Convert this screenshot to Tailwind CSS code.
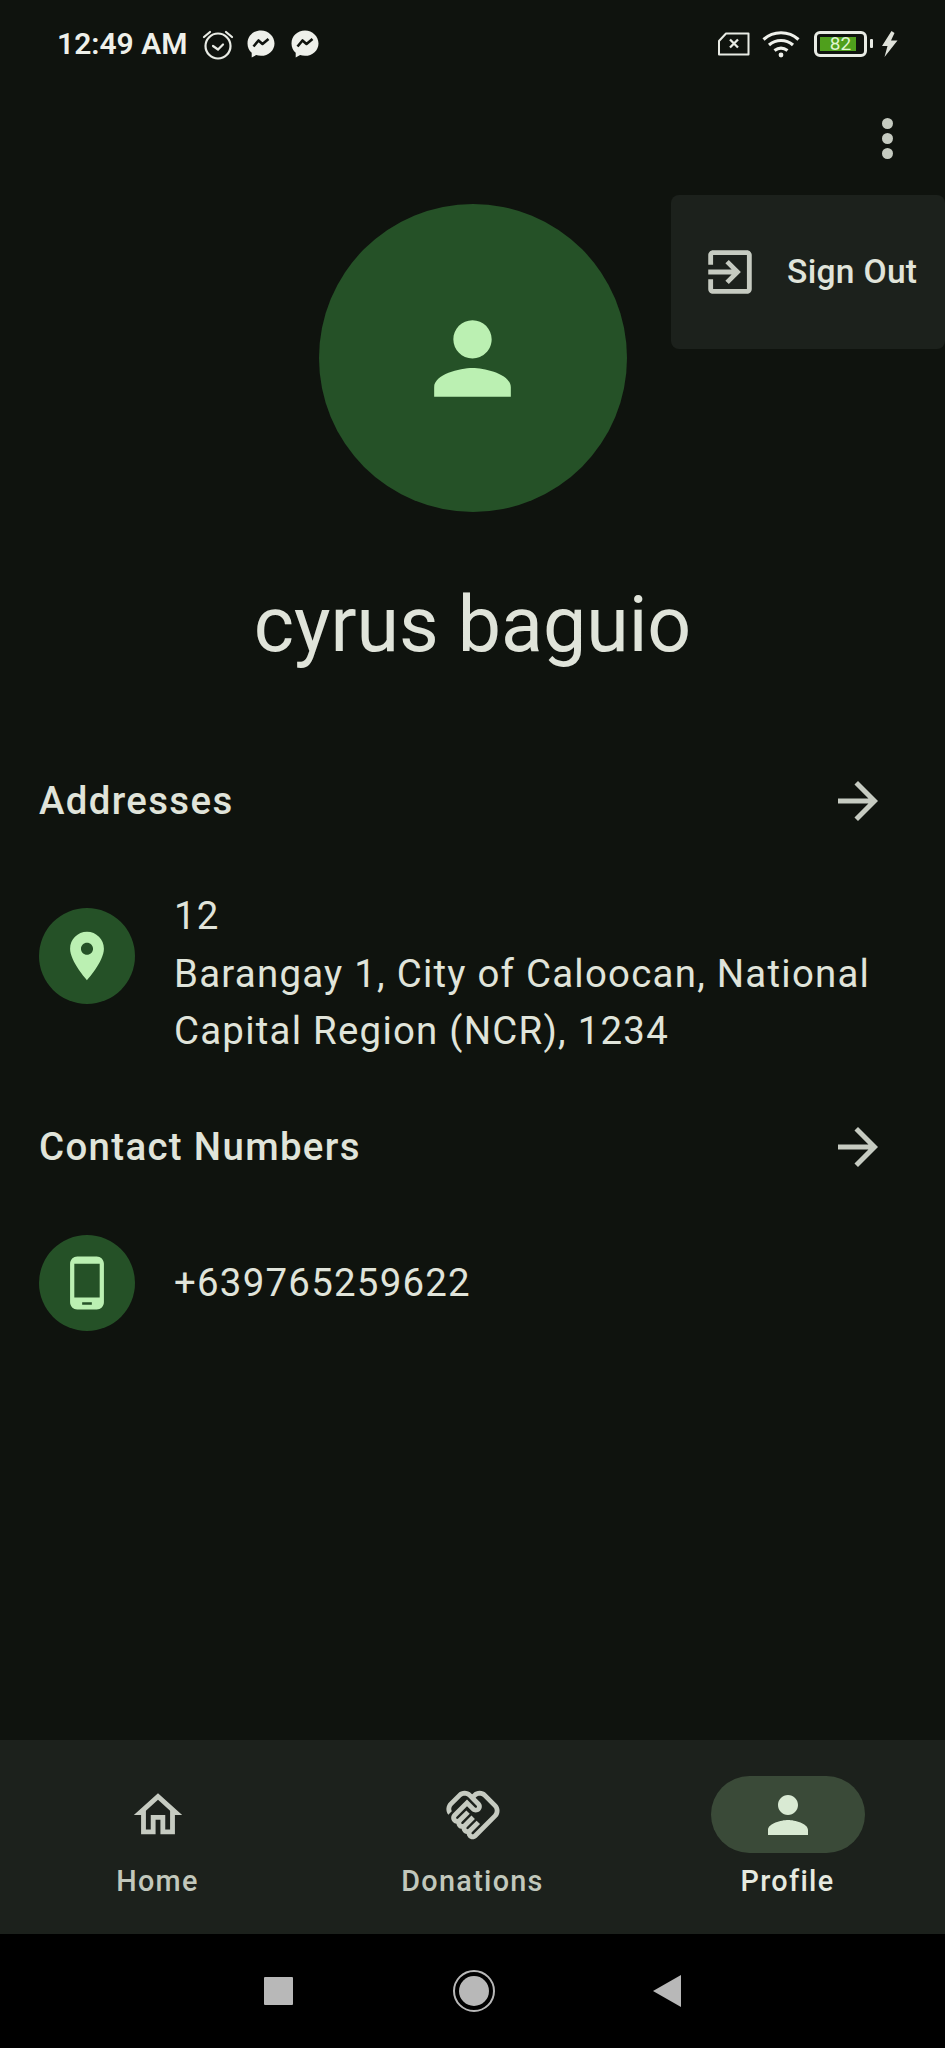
<!DOCTYPE html>
<html><head><meta charset="utf-8"><script src="https://cdn.jsdelivr.net/npm/@tailwindcss/browser@4"></script></head>
<body class="bg-[#0f130e]">
<div class="relative w-[945px] h-[2048px] flex flex-col bg-[#0f130e] overflow-hidden font-['Roboto',sans-serif] text-[#e0e4da]">
  <!-- status bar -->
  <div class="h-[86px] shrink-0 flex items-center pt-[1px] pl-[57px] pr-[47px] text-[#eef0ea]">
    <span class="text-[30px] font-semibold leading-none">12:49 AM</span>
    <svg class="ml-[14px] w-[34px] h-[34px] mt-[2px]" viewBox="0 0 34 34" fill="none" stroke="#e8ebe4" stroke-width="2.2"><circle cx="17" cy="18" r="12.5"/><path d="M12 18l5 3.5 5-5" stroke-linecap="round"/><path d="M3 9l6-5M31 9l-6-5" stroke-linecap="round"/></svg>
    <svg class="ml-[11px] w-[30px] h-[30px]" viewBox="0 0 30 30"><path fill="#eef0ea" d="M15 1.5C7.4 1.500 1.500 7.100 1.500 14.400c0 3.800 1.600 7.100 4.200 9.400v4.700l4.400-2.400c1.500.4 3.100.7 4.900.7 7.600 0 13.500-5.600 13.500-12.400S22.600 1.500 15 1.500z"/><path fill="none" stroke="#0f130e" stroke-width="2.6" stroke-linejoin="round" d="M7.500 17.500l5-6 4 3.500 6-5"/></svg>
    <svg class="ml-[14px] w-[30px] h-[30px]" viewBox="0 0 30 30"><path fill="#eef0ea" d="M15 1.5C7.400 1.500 1.500 7.100 1.500 14.400c0 3.800 1.600 7.100 4.200 9.400v4.700l4.400-2.400c1.500.4 3.100.7 4.900.7 7.600 0 13.500-5.600 13.500-12.400S22.600 1.500 15 1.500z"/><path fill="none" stroke="#0f130e" stroke-width="2.6" stroke-linejoin="round" d="M7.500 17.500l5-6 4 3.500 6-5"/></svg>
    <div class="flex-1"></div>
    <svg class="w-[33px] h-[24px]" viewBox="0 0 33 24" fill="none" stroke="#e8ebe4" stroke-width="2"><path d="M9 1.500h22.500v21H2V9z" stroke-linejoin="round"/><path d="M13 7.500l8 8M21 7.500l-8 8" stroke-width="2.300"/></svg>
    <svg class="ml-[12px] w-[38px] h-[28px]" viewBox="0 0 38 28" fill="none" stroke="#eef0ea" stroke-width="3.200"><path d="M1.500 9.500c10-9 25-9 35 0"/><path d="M7 15c7-6 17-6 24 0"/><path d="M12.500 20.500c4-3 9-3 13 0"/><circle cx="19" cy="25" r="2.400" fill="#eef0ea" stroke="none"/></svg>
    <div class="ml-[14px] relative w-[53px] h-[26px] rounded-[6px] border-[3px] border-[#e8ebe4] flex items-center justify-center">
      <div class="absolute left-[3px] top-[3px] bottom-[3px] w-[36px] bg-[#4f9f1c]"></div>
      <span class="relative text-[19px] leading-none text-[#dff5cf]">82</span>
    </div>
    <div class="ml-[3px] w-[3px] h-[9px] bg-[#e8ebe4] rounded-[1px]"></div>
    <svg class="ml-[8px] w-[17px] h-[26px]" viewBox="0 0 17 26"><path fill="#dfe2da" d="M10.500 0L1 15h5.500L3.500 26 16.500 9.500h-6.500L13.500 2z"/></svg>
  </div>
  <!-- app bar -->
  <div class="h-[104px] shrink-0 flex flex-col items-end justify-center gap-[4px] pr-[52px]">
    <div class="w-[11px] h-[11px] rounded-full bg-[#c6cbc1]"></div>
    <div class="w-[11px] h-[11px] rounded-full bg-[#c6cbc1]"></div>
    <div class="w-[11px] h-[11px] rounded-full bg-[#c6cbc1]"></div>
  </div>
  <!-- avatar -->
  <div class="mt-[14px] mx-auto w-[308px] h-[308px] shrink-0 rounded-full bg-[#255127] flex items-center justify-center">
    <svg class="w-[115px] h-[115px]" viewBox="0 0 24 24"><path fill="#bbf0b2" d="M12 12c2.210 0 4-1.790 4-4s-1.790-4-4-4-4 1.790-4 4 1.790 4 4 4zm0 2c-2.670 0-8 1.340-8 4v2h16v-2c0-2.660-5.330-4-8-4z"/></svg>
  </div>
  <div class="mt-[67px] text-center text-[77px] leading-[92px] shrink-0">cyrus baguio</div>
  <!-- addresses -->
  <div class="mt-[100px] flex items-center justify-between pl-[39px] pr-[67px] h-[60px] shrink-0">
    <span class="text-[38.400px] font-medium tracking-[1.350px]">Addresses</span>
    <svg class="w-[60px] h-[60px] -mr-[10px]" viewBox="0 0 24 24"><path fill="#c6cbc1" d="M12 4l-1.410 1.410L16.170 11H4v2h12.170l-5.580 5.590L12 20l8-8z"/></svg>
  </div>
  <div class="mt-[56px] flex items-start pl-[39px] pr-[60px] gap-[39px] shrink-0">
    <div class="mt-[21px] w-[96px] h-[96px] rounded-full bg-[#255127] flex items-center justify-center shrink-0">
      <svg class="w-[58px] h-[58px]" viewBox="0 0 24 24"><path fill="#bbf0b2" d="M12 2C8.130 2 5 5.130 5 9c0 5.250 7 13 7 13s7-7.750 7-13c0-3.870-3.130-7-7-7zm0 9.500c-1.380 0-2.500-1.120-2.500-2.500s1.120-2.500 2.500-2.500 2.500 1.120 2.500 2.500-1.120 2.500-2.500 2.500z"/></svg>
    </div>
    <div class="text-[38.400px] leading-[57.600px] tracking-[1.250px]">12<br>Barangay 1, City of Caloocan, National Capital Region (NCR), 1234</div>
  </div>
  <!-- contact -->
  <div class="mt-[57px] flex items-center justify-between pl-[39px] pr-[67px] h-[60px] shrink-0">
    <span class="text-[38.400px] font-medium tracking-[1.350px]">Contact Numbers</span>
    <svg class="w-[60px] h-[60px] -mr-[10px]" viewBox="0 0 24 24"><path fill="#c6cbc1" d="M12 4l-1.410 1.410L16.170 11H4v2h12.170l-5.580 5.590L12 20l8-8z"/></svg>
  </div>
  <div class="mt-[58px] flex items-center pl-[39px] gap-[39px] shrink-0">
    <div class="w-[96px] h-[96px] rounded-full bg-[#255127] flex items-center justify-center shrink-0">
      <svg class="w-[58px] h-[58px]" viewBox="0 0 24 24"><path fill="#bbf0b2" d="M16 1H8C6.340 1 5 2.340 5 4v16c0 1.660 1.340 3 3 3h8c1.660 0 3-1.340 3-3V4c0-1.660-1.340-3-3-3zm-2 20h-4v-1h4v1zm3.250-3H6.750V4h10.500v14z"/></svg>
    </div>
    <div class="text-[38.400px] leading-[57.600px] tracking-[1.250px]">+639765259622</div>
  </div>
  <div class="flex-1"></div>
  <!-- nav -->
  <div class="h-[194px] shrink-0 bg-[#1c211c] grid grid-cols-3 pt-[36px] text-[#c2c8bc]">
    <div class="flex flex-col items-center">
      <div class="w-[154px] h-[77px] flex items-center justify-center">
        <svg class="w-[58px] h-[58px]" viewBox="0 0 24 24"><path fill="#c6cbc1" d="M12 5.690l5 4.500V18h-2v-6H9v6H7v-7.810l5-4.500M12 3L2 12h3v8h6v-6h2v6h6v-8h3L12 3z"/></svg>
      </div>
      <span class="mt-[9px] text-[28.800px] leading-[38px] font-medium tracking-[1.300px]">Home</span>
    </div>
    <div class="flex flex-col items-center">
      <div class="w-[154px] h-[77px] flex items-center justify-center">
        <svg class="w-[58px] h-[58px]" viewBox="0 0 24 24"><path fill="#c6cbc1" d="M12.220 19.850c-.18.18-.5.21-.71 0-.18-.18-.21-.5 0-.71l3.390-3.390-1.410-1.410-3.390 3.390c-.19.2-.51.19-.71 0-.21-.21-.18-.53 0-.71l3.390-3.390-1.410-1.410-3.390 3.390c-.18.18-.5.21-.71 0-.19-.19-.19-.51 0-.71l3.390-3.390-1.420-1.410-3.390 3.390c-.18.18-.5.21-.71 0-.19-.2-.19-.51 0-.71L9.520 8.400l1.870 1.860c.95.95 2.590.94 3.540 0 .98-.98.98-2.560 0-3.540l-1.860-1.860.28-.28c.78-.78 2.050-.78 2.830 0l4.240 4.240c.78.78.78 2.050 0 2.830l-8.200 8.200zm9.610-6.780c1.560-1.560 1.560-4.090 0-5.660l-4.240-4.240c-1.560-1.560-4.090-1.560-5.660 0l-.28.28-.28-.28c-1.560-1.560-4.090-1.560-5.660 0L2.170 6.710c-1.420 1.420-1.550 3.630-.4 5.190l1.450-1.450c-.39-.75-.26-1.700.37-2.330l3.540-3.540c.78-.78 2.050-.78 2.830 0l3.560 3.560c.18.18.21.5 0 .71-.21.21-.53.18-.71 0L9.520 5.570l-5.800 5.790c-.98.97-.98 2.560 0 3.540.39.39.89.64 1.420.71.07.52.3 1.020.7 1.420.4.4.9.63 1.420.7.07.52.3 1.020.7 1.420.4.4.9.63 1.420.7.07.54.31 1.030.7 1.420.47.47 1.100.73 1.770.73.67 0 1.300-.26 1.770-.73l8.210-8.210z"/></svg>
      </div>
      <span class="mt-[9px] text-[28.800px] leading-[38px] font-medium tracking-[1.300px]">Donations</span>
    </div>
    <div class="flex flex-col items-center text-[#e6eae0]">
      <div class="w-[154px] h-[77px] rounded-full bg-[#3a4a38] flex items-center justify-center">
        <svg class="w-[60px] h-[60px]" viewBox="0 0 24 24"><path fill="#d9ead3" d="M12 12c2.210 0 4-1.790 4-4s-1.790-4-4-4-4 1.790-4 4 1.790 4 4 4zm0 2c-2.670 0-8 1.340-8 4v2h16v-2c0-2.660-5.330-4-8-4z"/></svg>
      </div>
      <span class="mt-[9px] text-[28.800px] leading-[38px] font-medium tracking-[1.300px]">Profile</span>
    </div>
  </div>
  <!-- system bar -->
  <div class="h-[114px] shrink-0 bg-black flex items-center justify-center">
    <div class="w-[29px] h-[28px] bg-[#b8b8b8] rounded-[1px]"></div>
    <div class="mx-[160px] w-[42px] h-[42px] rounded-full border-[2px] border-[#b8b8b8] flex items-center justify-center"><div class="w-[30px] h-[30px] rounded-full bg-[#b8b8b8]"></div></div>
    <svg class="w-[28px] h-[32px] -ml-[2px]" viewBox="0 0 28 32"><path fill="#b8b8b8" d="M0 16L28 0v32z"/></svg>
  </div>
  <!-- popup menu -->
  <div class="absolute left-[671px] top-[195px] w-[274px] h-[154px] rounded-[8px] bg-[#1c211c] flex items-center pl-[30px]">
    <svg class="w-[58px] h-[58px]" viewBox="0 0 24 24"><path fill="#c6cbc1" d="M10.090 15.590L11.500 17l5-5-5-5-1.410 1.410L12.670 11H3v2h9.670l-2.580 2.590zM19 3H5c-1.110 0-2 .9-2 2v4h2V5h14v14H5v-4H3v4c0 1.100.89 2 2 2h14c1.100 0 2-.9 2-2V5c0-1.100-.9-2-2-2z"/></svg>
    <span class="ml-[28px] mt-[1px] text-[33.600px] font-medium tracking-[.3px] text-[#e0e4da]">Sign Out</span>
  </div>
</div>
</body></html>
